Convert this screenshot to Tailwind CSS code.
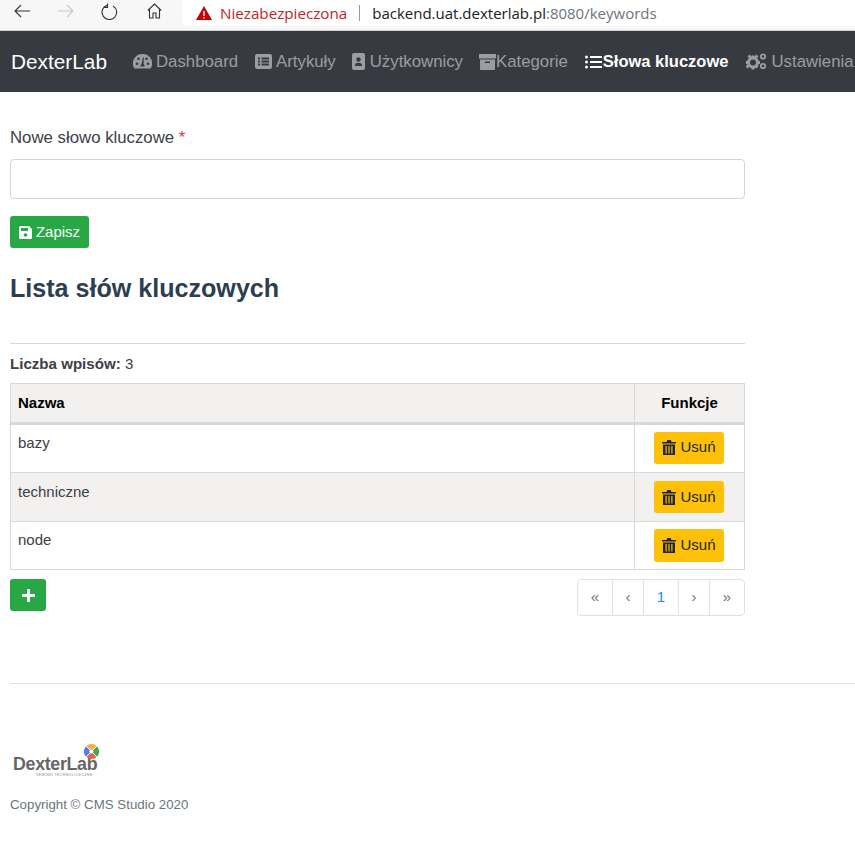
<!DOCTYPE html>
<html lang="en">
<head>
  <meta charset="UTF-8" />
  <title>Słowa kluczowe | DexterLab</title>
  <script src="https://cdn.jsdelivr.net/npm/@tailwindcss/browser@4"></script>
</head>
<body class="bg-white font-['Liberation_Sans',Arial,sans-serif] text-[#3d4047] overflow-hidden">

  <!-- Browser bar -->
  <div class="h-[31px] bg-[#f7f7f7] border-b border-[#d0d0d0] flex items-start overflow-hidden">
    <div class="w-[182px] h-[22px] flex items-center text-[#222]">
      <svg class="ml-[14px] w-[17px] h-[14px]" viewBox="0 0 17 14" fill="none" stroke="#333" stroke-width="1.1"><path d="M16 7H1M7 1 1 7l6 6"/></svg>
      <svg class="ml-[26px] w-[17px] h-[14px]" viewBox="0 0 17 14" fill="none" stroke="#c8c8c8" stroke-width="1.1"><path d="M1 7h15M10 1l6 6-6 6"/></svg>
      <svg class="ml-[27px] w-[17px] h-[17px]" viewBox="0 0 17 17" fill="none" stroke="#333" stroke-width="1.1"><path d="M6 2.300a7.300 7.300 0 1 0 6 .6M6.500 .6v3.800H2.700"/></svg>
      <svg class="ml-[29px] w-[15px] h-[16px]" viewBox="0 0 15 16" fill="none" stroke="#333" stroke-width="1.1"><path d="M.8 7.500 7.500 1l6.700 6.500M2.500 6v9h3.500v-5h3v5h3.500V6"/></svg>
    </div>
    <div class="w-[673px] h-[26px] bg-white rounded-bl-[6px] flex items-center font-['Open_Sans',sans-serif] text-[15px]">
      <svg class="ml-[14px] w-[16px] h-[14px]" viewBox="0 0 16 14"><path d="M8 0 16 14H0Z" fill="#c80000"/><path d="M7.300 5h1.400v5H7.300zM7.300 11h1.400v1.400H7.300z" fill="#fff"/></svg>
      <span class="ml-[8px] text-[#c5221f] text-[15.200px]">Niezabezpieczona</span>
      <span class="ml-[12px] w-px h-[16px] bg-[#9a9a9a]"></span>
      <span class="ml-[12px] text-[#202124]">backend.uat.dexterlab.pl<span class="text-[#70757a]">:8080/keywords</span></span>
    </div>
  </div>

  <!-- Navbar -->
  <nav class="h-[61px] bg-[#373a41] flex items-center pl-[11px] text-[16.800px] text-white/50 whitespace-nowrap">
    <a class="text-[20.800px] text-white mr-[26px]">DexterLab</a>
    <a class="flex items-center gap-[4px] mr-[17px]">
      <svg class="w-[19px] h-[17px]" viewBox="0 0 19 17" fill="#9b9da1"><path d="M9.500 1a9.300 9.300 0 0 0-8 14.500h16A9.300 9.300 0 0 0 9.500 1ZM4 12a1.300 1.300 0 1 1 0-2.600A1.300 1.300 0 0 1 4 12Zm1.500-5a1.300 1.300 0 1 1 0-2.600A1.300 1.300 0 0 1 5.500 7Zm5.800 6.500H7.700a2 2 0 0 1 1-2.500l1.200-6.600h.900l-.2 6.600a2 2 0 0 1 .700 2.500ZM13.500 7a1.300 1.300 0 1 1 0-2.600 1.300 1.300 0 0 1 0 2.600ZM15 12a1.300 1.300 0 1 1 0-2.600 1.300 1.300 0 0 1 0 2.600Z" fill-rule="evenodd"/></svg>
      Dashboard
    </a>
    <a class="flex items-center gap-[4px] mr-[16px]">
      <svg class="w-[17px] h-[15px]" viewBox="0 0 17 15"><rect width="17" height="15" rx="2" fill="#9b9da1"/><path d="M3 3.500h2v2H3zM3 6.500h2v2H3zM3 9.500h2v2H3zM6.500 3.500H14v2H6.500zM6.500 6.500H14v2H6.500zM6.500 9.500H14v2H6.500z" fill="#373a41"/></svg>
      Artykuły
    </a>
    <a class="flex items-center gap-[5px] mr-[16px]">
      <svg class="w-[13px] h-[17px]" viewBox="0 0 13 17"><rect width="13" height="17" rx="2" fill="#9b9da1"/><circle cx="6.500" cy="6.500" r="2.200" fill="#373a41"/><path d="M2.800 13c0-2.200 1.500-3.300 3.700-3.300s3.700 1.100 3.700 3.300z" fill="#373a41"/></svg>
      Użytkownicy
    </a>
    <a class="flex items-center mr-[17px]">
      <svg class="w-[17px] h-[16px]" viewBox="0 0 17 16"><path d="M0 0h17v4.500H0z" fill="#9b9da1"/><path d="M1 5.500h15V15a1 1 0 0 1-1 1H2a1 1 0 0 1-1-1z" fill="#9b9da1"/><path d="M6 7.500h5v1.500H6z" fill="#373a41"/></svg>
      Kategorie
    </a>
    <a class="flex items-center font-bold text-white text-[16.500px] mr-[18px]">
      <svg class="w-[18px] h-[14px]" viewBox="0 0 18 14" fill="#fff"><circle cx="1.500" cy="2" r="1.500"/><circle cx="1.500" cy="7" r="1.500"/><circle cx="1.500" cy="12" r="1.500"/><path d="M5 1h12v2H5zM5 6h12v2H5zM5 11h12v2H5z"/></svg>
      Słowa kluczowe
    </a>
    <a class="flex items-center gap-[4px]">
      <svg class="w-[21px] h-[17px]" viewBox="0 0 21 17" fill="#9b9da1"><circle cx="7" cy="9.500" r="4.500" fill="none" stroke="#9b9da1" stroke-width="3"/><path d="M5.500 2.500h3v3h-3zM5.500 13.500h3v3h-3zM0 8h3v3H0zM11 8h3v3h-3zM1.500 3.500l2-2 2 2-2 2zM10.500 15.500l-2-2 2-2 2 2zM1.500 15.500l2-2-2-2-2 2zM12.500 3.500l-2-2-2 2 2 2z"/><circle cx="17" cy="3.500" r="2.200" fill="none" stroke="#9b9da1" stroke-width="1.800"/><circle cx="17" cy="13" r="2.200" fill="none" stroke="#9b9da1" stroke-width="1.800"/></svg>
      Ustawienia
    </a>
  </nav>

  <!-- Main -->
  <main class="w-[735px] ml-[10px] pt-[36px]">
    <label class="block text-[16.800px] leading-[20px]">Nowe słowo kluczowe <span class="text-[#dc3545]">*</span></label>
    <input type="text" class="block w-full h-[40px] mt-[11px] border border-[#ced4da] rounded-[4px] bg-white" />
    <button class="mt-[17px] h-[32px] w-[79px] flex items-center justify-center gap-[4px] bg-[#28a745] text-white text-[15px] rounded-[3px]">
      <svg class="w-[13px] h-[13px]" viewBox="0 0 13 13"><path d="M1.500 0H10l3 3v8.500a1.500 1.500 0 0 1-1.500 1.500h-10A1.500 1.500 0 0 1 0 11.500v-10A1.500 1.500 0 0 1 1.500 0Z" fill="#fff"/><path d="M2 2h7v3H2z" fill="#28a745"/><circle cx="6.500" cy="9" r="1.800" fill="#28a745"/></svg>
      Zapisz
    </button>
    <h2 class="mt-[25px] text-[25.100px] leading-[30px] font-bold text-[#2c3e50]">Lista słów kluczowych</h2>
    <hr class="mt-[40px] border-[#d9d9d9]" />
    <p class="mt-[11px] text-[15.100px] leading-[18px]"><b>Liczba wpisów:</b> 3</p>

    <table class="mt-[10px] w-full border-collapse text-[15px]">
      <thead class="bg-[#f2f1f0] text-black font-bold">
        <tr class="h-[40px]">
          <th class="border border-[#d9d9d9] border-b-[3px] text-left pl-[7px] pt-[1px]">Nazwa</th>
          <th class="w-[110px] border border-[#d9d9d9] border-b-[3px] text-center pt-[1px]">Funkcje</th>
        </tr>
      </thead>
      <tbody>
        <tr class="h-[49px]">
          <td class="border border-[#d9d9d9] align-top pl-[7px] pt-[9px] leading-[18px]">bazy</td>
          <td class="border border-[#d9d9d9] align-middle">
            <button class="ml-[19px] mb-[2px] h-[32px] w-[70px] flex items-center justify-center gap-[4px] bg-[#ffc107] text-[#212529] rounded-[3px]">
              <svg class="w-[14px] h-[15px]" viewBox="0 0 14 15" fill="#212529"><path d="M0 2h4.500l.8-2h3.400l.8 2H14v1.500H0z"/><path d="M1 4.500h12V15H1zM3.500 6v7.500h1.200V6zM6.400 6v7.500h1.200V6zM9.300 6v7.500h1.200V6z" fill-rule="evenodd"/></svg>
              Usuń
            </button>
          </td>
        </tr>
        <tr class="h-[49px] bg-[#f2f1f0]">
          <td class="border border-[#d9d9d9] align-top pl-[7px] pt-[10px] leading-[18px]">techniczne</td>
          <td class="border border-[#d9d9d9] align-middle">
            <button class="ml-[19px] h-[32px] w-[70px] flex items-center justify-center gap-[4px] bg-[#ffc107] text-[#212529] rounded-[3px]">
              <svg class="w-[14px] h-[15px]" viewBox="0 0 14 15" fill="#212529"><path d="M0 2h4.500l.8-2h3.400l.8 2H14v1.500H0z"/><path d="M1 4.500h12V15H1zM3.500 6v7.500h1.200V6zM6.400 6v7.500h1.200V6zM9.300 6v7.500h1.200V6z" fill-rule="evenodd"/></svg>
              Usuń
            </button>
          </td>
        </tr>
        <tr class="h-[48px]">
          <td class="border border-[#d9d9d9] align-top pl-[7px] pt-[9px] leading-[18px]">node</td>
          <td class="border border-[#d9d9d9] align-middle">
            <button class="ml-[19px] h-[33px] w-[70px] flex items-center justify-center gap-[4px] bg-[#ffc107] text-[#212529] rounded-[3px]">
              <svg class="w-[14px] h-[15px]" viewBox="0 0 14 15" fill="#212529"><path d="M0 2h4.500l.8-2h3.400l.8 2H14v1.500H0z"/><path d="M1 4.500h12V15H1zM3.500 6v7.500h1.200V6zM6.400 6v7.500h1.200V6zM9.300 6v7.500h1.200V6z" fill-rule="evenodd"/></svg>
              Usuń
            </button>
          </td>
        </tr>
      </tbody>
    </table>

    <div class="mt-[9px] flex items-start justify-between">
      <button class="h-[32px] w-[36px] flex items-center justify-center bg-[#28a745] rounded-[3px]">
        <svg class="w-[13px] h-[13px]" viewBox="0 0 13 13" fill="#fff"><path d="M5 0h3v5h5v3H8v5H5V8H0V5h5z"/></svg>
      </button>
      <div class="h-[37px] flex border border-[#dee2e6] rounded-[4px] text-[15px] text-[#6c757d]">
        <a class="w-[35px] flex items-center justify-center border-r border-[#dee2e6]">«</a>
        <a class="w-[31px] flex items-center justify-center border-r border-[#dee2e6]">‹</a>
        <a class="w-[35px] flex items-center justify-center border-r border-[#dee2e6] text-[#1a8cff]">1</a>
        <a class="w-[31px] flex items-center justify-center border-r border-[#dee2e6]">›</a>
        <a class="w-[34px] flex items-center justify-center">»</a>
      </div>
    </div>
  </main>

  <!-- Footer -->
  <footer class="mt-[67px] ml-[10px] border-t border-[#e2e2e2]">
    <div class="mt-[60px] ml-[3px] w-[90px] h-[34px] relative">
      <span class="absolute left-0 top-[12px] text-[17.800px] leading-[17px] font-bold tracking-[-0.3px] text-[#666]">DexterLab</span>
      <svg class="absolute left-[71px] top-0 w-[15px] h-[15px]" viewBox="0 0 16 16">
        <path d="M8 8 2.300 2.300a8 8 0 0 1 11.400 0z" fill="#f5b042"/>
        <path d="M8 8l5.700-5.700a8 8 0 0 1 0 11.400z" fill="#3eaa4a"/>
        <path d="M8 8l5.700 5.700a8 8 0 0 1-11.400 0z" fill="#ea5f55"/>
        <path d="M8 8 2.300 13.700a8 8 0 0 1 0-11.400z" fill="#4f7fe8"/>
        <path d="M2.300 2.300l11.400 11.400M13.700 2.300 2.300 13.700" stroke="#fff" stroke-width="1"/>
        <circle cx="8" cy="8" r="2.200" fill="#fff"/>
      </svg>
      <span class="absolute left-[23px] top-[29px] text-[3.500px] leading-[4px] tracking-[0.4px] text-[#888]">SEMINSI TECHNOLOGICZNE</span>
    </div>
    <p class="mt-[19px] text-[13.300px] leading-[16px] text-[#6c757d]">Copyright © CMS Studio 2020</p>
  </footer>

</body>
</html>
